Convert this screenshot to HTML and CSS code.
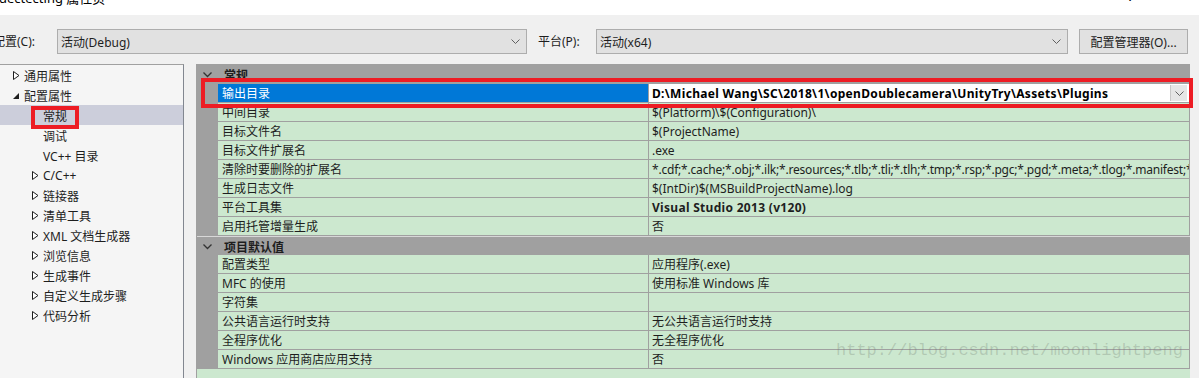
FILE: index.html
```html
<!DOCTYPE html>
<html lang="zh-CN">
<head>
<meta charset="utf-8">
<title>dectecting 属性页</title>
<link rel="stylesheet" href="styles.css">
</head>
<body>
<div class="window">
  <div class="titlebar">
    <span class="title">dectecting 属性页</span>
    <span class="tb-btns"><span class="tb-help">?</span><span class="tb-close">✕</span></span>
  </div>

  <div class="toolbar">
    <span class="lbl lbl-config">配置(C):</span>
    <div class="select sel-config"><span>活动(Debug)</span><svg class="chev" width="9" height="5" viewBox="0 0 9 5"><polyline points="0.5,0.5 4.5,4.5 8.5,0.5" fill="none" stroke="#606060" stroke-width="1"/></svg></div>
    <span class="lbl lbl-platform">平台(P):</span>
    <div class="select sel-platform"><span>活动(x64)</span><svg class="chev" width="9" height="5" viewBox="0 0 9 5"><polyline points="0.5,0.5 4.5,4.5 8.5,0.5" fill="none" stroke="#606060" stroke-width="1"/></svg></div>
    <button class="btn">配置管理器(O)...</button>
  </div>

  <div class="main">
    <div class="tree">
      <div class="node l1"><svg class="arr" width="7" height="9" viewBox="0 0 7 9"><polygon points="0.5,0.5 6,4.5 0.5,8.5" fill="#fff" stroke="#1e1e1e"/></svg><span>通用属性</span></div>
      <div class="node l1"><svg class="arr" width="7" height="9" viewBox="0 0 7 9"><polygon points="6,2 6,8 0,8" fill="#1e1e1e"/></svg><span>配置属性</span></div>
      <div class="node l2 sel"><span class="noarr"></span><span>常规</span></div>
      <div class="node l2"><span class="noarr"></span><span>调试</span></div>
      <div class="node l2"><span class="noarr"></span><span>VC++ 目录</span></div>
      <div class="node l2"><svg class="arr" width="7" height="9" viewBox="0 0 7 9"><polygon points="0.5,0.5 6,4.5 0.5,8.5" fill="#fff" stroke="#1e1e1e"/></svg><span>C/C++</span></div>
      <div class="node l2"><svg class="arr" width="7" height="9" viewBox="0 0 7 9"><polygon points="0.5,0.5 6,4.5 0.5,8.5" fill="#fff" stroke="#1e1e1e"/></svg><span>链接器</span></div>
      <div class="node l2"><svg class="arr" width="7" height="9" viewBox="0 0 7 9"><polygon points="0.5,0.5 6,4.5 0.5,8.5" fill="#fff" stroke="#1e1e1e"/></svg><span>清单工具</span></div>
      <div class="node l2"><svg class="arr" width="7" height="9" viewBox="0 0 7 9"><polygon points="0.5,0.5 6,4.5 0.5,8.5" fill="#fff" stroke="#1e1e1e"/></svg><span>XML 文档生成器</span></div>
      <div class="node l2"><svg class="arr" width="7" height="9" viewBox="0 0 7 9"><polygon points="0.5,0.5 6,4.5 0.5,8.5" fill="#fff" stroke="#1e1e1e"/></svg><span>浏览信息</span></div>
      <div class="node l2"><svg class="arr" width="7" height="9" viewBox="0 0 7 9"><polygon points="0.5,0.5 6,4.5 0.5,8.5" fill="#fff" stroke="#1e1e1e"/></svg><span>生成事件</span></div>
      <div class="node l2"><svg class="arr" width="7" height="9" viewBox="0 0 7 9"><polygon points="0.5,0.5 6,4.5 0.5,8.5" fill="#fff" stroke="#1e1e1e"/></svg><span>自定义生成步骤</span></div>
      <div class="node l2"><svg class="arr" width="7" height="9" viewBox="0 0 7 9"><polygon points="0.5,0.5 6,4.5 0.5,8.5" fill="#fff" stroke="#1e1e1e"/></svg><span>代码分析</span></div>
    </div>

    <div class="grid">
      <div class="cat cat-first"><svg class="cchev" width="9" height="6" viewBox="0 0 9 6"><polyline points="0.5,0.5 4.5,4.5 8.5,0.5" fill="none" stroke="#333" stroke-width="1.3"/></svg><span>常规</span></div>
      <div class="row"><div class="gut"></div><div class="name name-sel">输出目录</div><div class="val val-edit"><span class="edit-text">D:\Michael Wang\SC\2018\1\openDoublecamera\UnityTry\Assets\Plugins</span><span class="ddbtn"><svg width="9" height="5" viewBox="0 0 9 5"><polyline points="0.5,0.5 4.5,4.5 8.5,0.5" fill="none" stroke="#606060" stroke-width="1"/></svg></span></div></div>
      <div class="row"><div class="gut"></div><div class="name">中间目录</div><div class="val">$(Platform)\$(Configuration)\</div></div>
      <div class="row"><div class="gut"></div><div class="name">目标文件名</div><div class="val">$(ProjectName)</div></div>
      <div class="row"><div class="gut"></div><div class="name">目标文件扩展名</div><div class="val">.exe</div></div>
      <div class="row"><div class="gut"></div><div class="name">清除时要删除的扩展名</div><div class="val val-tight">*.cdf;*.cache;*.obj;*.ilk;*.resources;*.tlb;*.tli;*.tlh;*.tmp;*.rsp;*.pgc;*.pgd;*.meta;*.tlog;*.manifest;*.res;*.pch;*.exp;*.idb;*.rep;*.xdc;*.pdb;*_manifest.rc</div></div>
      <div class="row"><div class="gut"></div><div class="name">生成日志文件</div><div class="val">$(IntDir)$(MSBuildProjectName).log</div></div>
      <div class="row"><div class="gut"></div><div class="name">平台工具集</div><div class="val bold">Visual Studio 2013 (v120)</div></div>
      <div class="row"><div class="gut"></div><div class="name">启用托管增量生成</div><div class="val">否</div></div>
      <div class="cat"><svg class="cchev" width="9" height="6" viewBox="0 0 9 6"><polyline points="0.5,0.5 4.5,4.5 8.5,0.5" fill="none" stroke="#333" stroke-width="1.3"/></svg><span>项目默认值</span></div>
      <div class="row"><div class="gut"></div><div class="name">配置类型</div><div class="val">应用程序(.exe)</div></div>
      <div class="row"><div class="gut"></div><div class="name">MFC 的使用</div><div class="val">使用标准 Windows 库</div></div>
      <div class="row"><div class="gut"></div><div class="name">字符集</div><div class="val"></div></div>
      <div class="row"><div class="gut"></div><div class="name">公共语言运行时支持</div><div class="val">无公共语言运行时支持</div></div>
      <div class="row"><div class="gut"></div><div class="name">全程序优化</div><div class="val">无全程序优化</div></div>
      <div class="row"><div class="gut"></div><div class="name">Windows 应用商店应用支持</div><div class="val">否</div></div>
    </div>
  </div>

  <div class="mark mark-tree"></div>
  <div class="mark mark-row"></div>
  <div class="watermark">http://blog.csdn.net/moonlightpeng</div>
</div>
</body>
</html>
```

FILE: styles.css
```css
* { box-sizing: border-box; }
html, body { margin: 0; padding: 0; }
body {
  width: 1199px;
  height: 378px;
  overflow: hidden;
  background: #f0f0f0;
  font-family: "Noto Sans", "Noto Sans CJK SC", sans-serif;
  font-size: 12px;
  color: #1e1e1e;
}
.window {
  position: relative;
  width: 1199px;
  height: 378px;
  overflow: hidden;
}

/* title bar */
.titlebar {
  height: 15px;
  background: #ffffff;
  display: flex;
  justify-content: space-between;
  overflow: hidden;
}
.title {
  font-size: 13px;
  line-height: 15px;
  margin-top: -9px;
  margin-left: -1px;
  color: #000;
}
.tb-btns {
  display: flex;
  margin-top: -11px;
  font-size: 13px;
  line-height: 15px;
  color: #000;
}
.tb-help { width: 45px; text-align: center; }
.tb-close { width: 44px; text-align: center; margin-right: 2px; }

/* toolbar */
.toolbar {
  display: flex;
  align-items: center;
  margin-top: 14px;
  margin-left: -7px;
  height: 25px;
}
.lbl {
  font-size: 12px;
  line-height: 25px;
  color: #1e1e1e;
  white-space: nowrap;
}
.lbl-config { width: 64px; }
.lbl-platform { width: 58px; margin-left: 11px; }
.select {
  height: 25px;
  background: #e1e1e1;
  border: 1px solid #adadad;
  display: flex;
  align-items: center;
  justify-content: space-between;
  padding: 0 6px 0 3px;
}
.sel-config { width: 470px; }
.sel-platform { width: 472px; }
.chev { display: block; }
.btn {
  margin-left: 11px;
  width: 109px;
  height: 25px;
  background: #e1e1e1;
  border: 1px solid #adadad;
  font-family: inherit;
  font-size: 12px;
  color: #1e1e1e;
  padding: 0;
}

/* main area */
.main {
  display: flex;
  margin-top: 10px;
  height: 314px;
}
.tree {
  width: 184px;
  background: #f5f5f5;
  border-top: 1px solid #a0a0a0;
  border-right: 1px solid #828790;
  flex: none;
}
.node {
  height: 20px;
  display: flex;
  align-items: center;
  padding-top: 1px;
  white-space: nowrap;
  color: #1e1e1e;
}
.node.l1 { padding-left: 9px; }
.node.l2 { padding-left: 28px; }
.node .arr, .node .noarr {
  width: 15px;
  flex: none;
  display: block;
}
.node.sel { background: #cccedb; }

/* property grid */
.grid {
  margin-left: 12px;
  width: 994px;
  flex: none;
  background: #cce8cf;
  border-left: 1px solid #a0a0a0;
  overflow: hidden;
}
.cat {
  height: 19px;
  background: #a0a0a0;
  display: flex;
  align-items: center;
  padding-top: 1px;
  font-weight: bold;
  color: #1e1e1e;
  border-top: 1px solid #d8d8d8;
}
.cat-first { height: 20px; border-top: none; padding-top: 2px; }
.cat .cchev { margin-left: 6px; width: 21px; flex: none; padding-right: 12px; }
.row {
  display: flex;
  height: 19px;
}
.gut {
  width: 21px;
  flex: none;
  background: #a0a0a0;
}
.name {
  width: 431px;
  flex: none;
  padding-left: 4px;
  padding-top: 2px;
  border-right: 1px solid #a0a0a0;
  border-bottom: 1px solid #a0a0a0;
  line-height: 16px;
  white-space: nowrap;
  overflow: hidden;
}
.name-sel {
  background: #0078d7;
  color: #ffffff;
}
.val {
  flex: 1;
  padding-left: 3px;
  padding-top: 2px;
  border-bottom: 1px solid #a0a0a0;
  border-right: 1px solid #a0a0a0;
  line-height: 16px;
  white-space: nowrap;
  overflow: hidden;
}
.val.bold { font-weight: bold; letter-spacing: 0.3px; }
.val-tight { letter-spacing: -0.2px; }
.val-edit {
  display: flex;
  align-items: center;
  background: #ffffff;
  padding-left: 3px;
  padding-right: 2px;
}
.edit-text {
  flex: 1;
  font-weight: bold;
  letter-spacing: 0.32px;
  color: #000;
  overflow: hidden;
}
.ddbtn {
  width: 17px;
  height: 16px;
  margin-top: -2px;
  background: #e6e6e6;
  border-left: 1px solid #c8c8c8;
  display: flex;
  align-items: center;
  justify-content: center;
  flex: none;
}

/* annotation overlays */
.mark {
  position: absolute;
  border: 4px solid #ed1c24;
}
.mark-tree { left: 31px; top: 106px; width: 48px; height: 23px; }
.mark-row { left: 201px; top: 78px; width: 992px; height: 30px; }

.watermark {
  position: absolute;
  left: 836px;
  top: 341px;
  font-family: "Liberation Mono", monospace;
  font-size: 17px;
  color: rgba(110, 120, 110, 0.28);
  white-space: nowrap;
}
```
